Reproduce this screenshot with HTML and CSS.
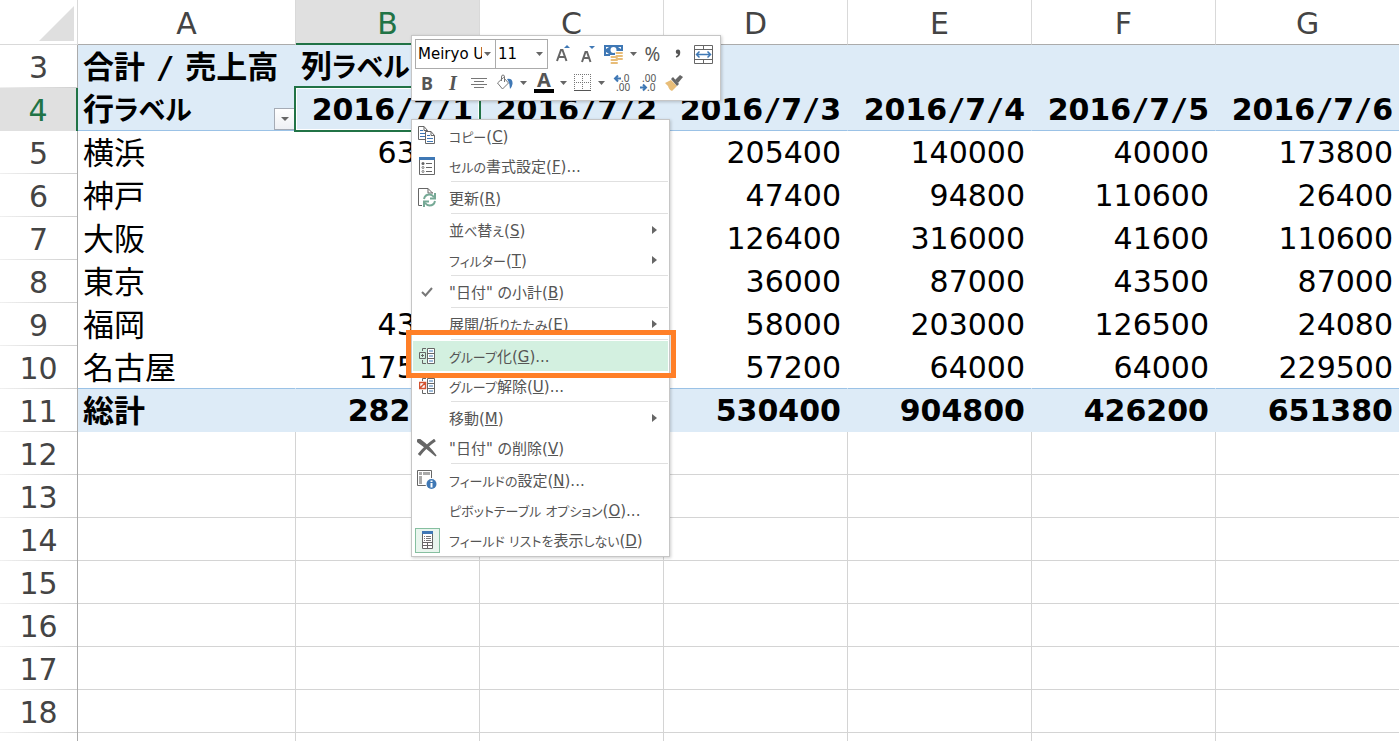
FILE: index.html
```html
<!DOCTYPE html>
<html lang="ja">
<head>
<meta charset="utf-8">
<title>合計 / 売上高</title>
<link rel="stylesheet" href="styles.css">
</head>
<body>
<main class="sheet">
<table class="grid">
<colgroup><col class="col-num"><col class="col-a"><col class="col-day"><col class="col-day"><col class="col-day"><col class="col-day"><col class="col-day"><col></colgroup>
<thead>
<tr><th class="corner"><svg width="35" height="35" viewBox="0 0 35 35" aria-hidden="true"><path d="M35 0V35H0Z" fill="#dfdfdf"/></svg></th><th>A</th><th class="current">B</th><th>C</th><th>D</th><th>E</th><th>F</th><th>G</th></tr>
</thead>
<tbody>
<tr class="label-row"><th>3</th><td class="name">合計 <span class="slash">/</span> 売上高</td><td class="name">列<span class="kana">ラベル</span></td><td></td><td></td><td></td><td></td><td></td></tr>
<tr class="label-row ruled"><th class="current">4</th><td class="name has-filter">行<span class="kana">ラベル</span><button class="filter" aria-label="フィルター"><svg width="8" height="4" viewBox="0 0 8 4"><path d="M0 0H8L4 4Z" fill="#666"/></svg></button></td><td class="active">2016<span class="slash">/</span>7<span class="slash">/</span>1</td><td>2016<span class="slash">/</span>7<span class="slash">/</span>2</td><td>2016<span class="slash">/</span>7<span class="slash">/</span>3</td><td>2016<span class="slash">/</span>7<span class="slash">/</span>4</td><td>2016<span class="slash">/</span>7<span class="slash">/</span>5</td><td>2016<span class="slash">/</span>7<span class="slash">/</span>6</td></tr>
<tr class="data"><th>5</th><td class="name">横浜</td><td>63000</td><td></td><td>205400</td><td>140000</td><td>40000</td><td>173800</td></tr>
<tr class="data"><th>6</th><td class="name">神戸</td><td></td><td></td><td>47400</td><td>94800</td><td>110600</td><td>26400</td></tr>
<tr class="data"><th>7</th><td class="name">大阪</td><td></td><td></td><td>126400</td><td>316000</td><td>41600</td><td>110600</td></tr>
<tr class="data"><th>8</th><td class="name">東京</td><td></td><td></td><td>36000</td><td>87000</td><td>43500</td><td>87000</td></tr>
<tr class="data"><th>9</th><td class="name">福岡</td><td>43000</td><td></td><td>58000</td><td>203000</td><td>126500</td><td>24080</td></tr>
<tr class="data ruled"><th>10</th><td class="name">名古屋</td><td>175000</td><td></td><td>57200</td><td>64000</td><td>64000</td><td>229500</td></tr>
<tr class="label-row"><th>11</th><td class="name">総計</td><td>282000</td><td></td><td>530400</td><td>904800</td><td>426200</td><td>651380</td></tr>
<tr><th>12</th><td></td><td></td><td></td><td></td><td></td><td></td><td></td></tr>
<tr><th>13</th><td></td><td></td><td></td><td></td><td></td><td></td><td></td></tr>
<tr><th>14</th><td></td><td></td><td></td><td></td><td></td><td></td><td></td></tr>
<tr><th>15</th><td></td><td></td><td></td><td></td><td></td><td></td><td></td></tr>
<tr><th>16</th><td></td><td></td><td></td><td></td><td></td><td></td><td></td></tr>
<tr><th>17</th><td></td><td></td><td></td><td></td><td></td><td></td><td></td></tr>
<tr><th>18</th><td></td><td></td><td></td><td></td><td></td><td></td><td></td></tr>
<tr><th></th><td></td><td></td><td></td><td></td><td></td><td></td><td></td></tr>
</tbody>
</table>

<div class="toolbar" role="toolbar" aria-label="書式">
<div class="tools tools-top">
<span class="combo combo-font"><select aria-label="フォント"><option>Meiryo UI</option></select><svg class="caret" width="7" height="4" viewBox="0 0 7 4"><path d="M0 0H7L3.500 4Z"/></svg></span>
<span class="combo combo-size"><select aria-label="フォント サイズ"><option>11</option></select><svg class="caret" width="7" height="4" viewBox="0 0 7 4"><path d="M0 0H7L3.500 4Z"/></svg></span>
<button class="tool first" aria-label="拡大"><svg width="18" height="20" viewBox="0 0 18 20"><path d="M3 17L7 6H8.500L12.500 17M4.500 13H11" fill="none" stroke="#666" stroke-width="2"/><path d="M10 4L13 1L16 4Z" fill="#3f78b5"/></svg></button>
<button class="tool" aria-label="縮小"><svg width="18" height="20" viewBox="0 0 18 20"><path d="M3 18L6.500 8H8L11.500 18M4.500 14H10" fill="none" stroke="#666" stroke-width="2"/><path d="M10 2H16L13 5Z" fill="#3f78b5"/></svg></button>
<button class="tool wide" aria-label="通貨"><svg width="20" height="20" viewBox="0 0 20 20"><path d="M0 1H19V12H0Z" fill="#3f78b5"/><path d="M2 3H5L2 5ZM17 3H14L17 5ZM2 10H5L2 8Z" fill="#fff"/><circle cx="9.500" cy="6" r="3" fill="#fff"/><path d="M11 7H20V18H15V20H6V11H11Z" fill="#fff"/><path d="M12.500 9H18M12.500 12H18M12.500 15H18M7.500 13H13M7.500 16H13M7.500 19H13" stroke="#e8bd78" stroke-width="2" stroke-linecap="round"/></svg><svg class="caret" width="7" height="4" viewBox="0 0 7 4"><path d="M0 0H7L3.500 4Z"/></svg></button>
<button class="tool percent">%</button>
<button class="tool" aria-label="桁区切り"><svg width="6" height="10" viewBox="0 0 8 12"><path d="M1 3Q1 0 4 0Q7 0 7 4Q7 9 2 11L1 9Q4 8 4 6Q1 6 1 3Z" fill="#555"/></svg></button>
<button class="tool" aria-label="セルを結合"><svg width="20" height="20" viewBox="0 0 20 20"><path d="M1.500 1.500H19.500V19.500H1.500ZM1.500 5.500H19.500M1.500 15.500H19.500M10.500 1.500V5.500M10.500 15.500V19.500" fill="none" stroke="#666"/><path d="M4 10.500H17M6.500 7.500L3.500 10.500L6.500 13.500M14.500 7.500L17.500 10.500L14.500 13.500" fill="none" stroke="#3f78b5" stroke-width="1.500"/></svg></button>
</div>
<div class="tools tools-bottom">
<button class="tool bold">B</button>
<button class="tool italic">I</button>
<button class="tool" aria-label="中央揃え"><svg width="16" height="13" viewBox="0 0 16 13"><path d="M0 1.500H16M3 4.500H13M0 7.500H16M3 10.500H13" stroke="#777"/></svg></button>
<button class="tool wide" aria-label="塗りつぶしの色"><svg width="18" height="18" viewBox="0 0 18 18"><path d="M1.500 9L7.500 3.500L12.500 9L6.500 15Z" fill="#fff" stroke="#777"/><path d="M5.500 7V3Q5.500 1 7 1Q8.500 1 8.500 3V8" fill="none" stroke="#777"/><path d="M11 5Q17 4 16.500 10Q16 13 14 15Q14 9 11 5Z" fill="#3f78b5"/></svg><svg class="caret" width="7" height="4" viewBox="0 0 7 4"><path d="M0 0H7L3.500 4Z"/></svg></button>
<button class="tool wide" aria-label="フォントの色"><span class="ink">A</span><svg class="caret" width="7" height="4" viewBox="0 0 7 4"><path d="M0 0H7L3.500 4Z"/></svg></button>
<button class="tool wide" aria-label="罫線"><svg width="18" height="18" viewBox="0 0 18 18" shape-rendering="crispEdges"><path d="M0 .5H17M.5 0V16M16.500 0V16M8.500 0V16M0 8.500H17" fill="none" stroke="#777" stroke-dasharray="1 1"/><path d="M0 16.500H17" stroke="#555"/></svg><svg class="caret" width="7" height="4" viewBox="0 0 7 4"><path d="M0 0H7L3.500 4Z"/></svg></button>
<button class="tool" aria-label="小数点以下の表示桁数を増やす"><svg class="digits" width="22" height="26" viewBox="0 0 22 26"><path d="M4 8.500H10M7 5.500L4 8.500L7 11.500" fill="none" stroke="#3f78b5" stroke-width="2"/><text x="10" y="12">.0</text><text x="5" y="21">.00</text></svg></button>
<button class="tool" aria-label="小数点以下の表示桁数を減らす"><svg class="digits" width="22" height="26" viewBox="0 0 22 26"><text x="5" y="12">.00</text><path d="M3 17.500H9M6 14.500L9 17.500L6 20.500" fill="none" stroke="#3f78b5" stroke-width="2"/><text x="10" y="21">.0</text></svg></button>
<button class="tool" aria-label="書式のコピー"><svg width="18" height="18" viewBox="0 0 18 18"><path d="M0 9L6 6L12 12L7 17Q4 16 3 12Z" fill="#e8bd78"/><path d="M6 5L8 3L14 10L12 12Z" fill="#666"/><path d="M10 6L15 1L18 3L13 9Z" fill="#666"/></svg></button>
</div>
</div>

<div class="menu" role="menu">
<button class="item" role="menuitem"><span class="icon"><svg width="18" height="20" viewBox="0 0 18 20"><path d="M.5 .5H6L9.500 4.500V13.500H.5ZM6 .5V4.500H9.500" fill="#fff" stroke="#666"/><path d="M2 4.500H5M2 7.500H7M2 10.500H7" stroke="#3f78b5"/><path d="M7.500 5.500H13L16.500 9.500V17.500H7.500ZM13 5.500V9.500H16.500" fill="#fff" stroke="#666"/><path d="M9 9.500H12M9 12.500H15M9 15.500H15" stroke="#3f78b5"/></svg></span><span class="text"><span class="kana">コピー</span>(<u>C</u>)</span></button>
<button class="item" role="menuitem"><span class="icon"><svg width="16" height="18" viewBox="0 0 16 18"><path d="M.5 .5H15.500V17.500H.5Z" fill="#fff" stroke="#666"/><path d="M0 0H16V3H0Z" fill="#3f78b5"/><path d="M7 6.500H13M7 10.500H13M7 14.500H13" stroke="#666"/><circle cx="4" cy="6.500" r="1.500" fill="#666"/><g fill="none" stroke="#777"><circle cx="4" cy="10.500" r="1"/><circle cx="4" cy="14.500" r="1"/></g></svg></span><span class="text"><span class="kana">セルの</span>書式設定(<u>F</u>)...</span></button>
<hr>
<button class="item" role="menuitem"><span class="icon"><svg width="18" height="20" viewBox="0 0 18 20"><path d="M4 17.500H.5V.5H10L14.500 5M10 .5V5H15" fill="none" stroke="#666"/><path d="M6 11Q7 6.500 11.500 6.500Q14 6.500 16 9M17 5V10.500H12M17 13Q16 17.500 11.500 17.500Q9 17.500 7 15M6 19V13.500H11" fill="none" stroke="#76a996" stroke-width="2"/></svg></span><span class="text">更新(<u>R</u>)</span></button>
<hr>
<button class="item" role="menuitem"><span class="icon"></span><span class="text">並<span class="kana">べ</span>替<span class="kana">え</span>(<u>S</u>)</span><svg class="more" width="5" height="8" viewBox="0 0 5 8"><path d="M0 0L5 4L0 8Z"/></svg></button>
<button class="item" role="menuitem"><span class="icon"></span><span class="text"><span class="kana">フィルター</span>(<u>T</u>)</span><svg class="more" width="5" height="8" viewBox="0 0 5 8"><path d="M0 0L5 4L0 8Z"/></svg></button>
<hr>
<button class="item" role="menuitemcheckbox" aria-checked="true"><span class="icon"><svg width="12" height="12" viewBox="0 0 12 12"><path d="M1 6L4.500 9.500L11 2" fill="none" stroke="#777" stroke-width="2"/></svg></span><span class="text">"日付" の小計(<u>B</u>)</span></button>
<hr>
<button class="item" role="menuitem"><span class="icon"></span><span class="text">展開/折<span class="kana">りたたみ</span>(<u>E</u>)</span><svg class="more" width="5" height="8" viewBox="0 0 5 8"><path d="M0 0L5 4L0 8Z"/></svg></button>
<hr>
<button class="item hover" role="menuitem"><span class="icon"><svg width="16" height="18" viewBox="0 0 16 18"><path d="M8.500 1.500H15.500V16.500H8.500ZM8.500 6.500H15.500M8.500 11.500H15.500" fill="#fff" stroke="#666"/><path d="M10 4H14M10 9H14M10 14H14" stroke="#3f78b5"/><path d="M7 1.500H3.500V4M7 16.500H3.500V13M.5 5.500H6.500V11.500H.5ZM2 8.500H5M3.500 7V10" fill="none" stroke="#666"/></svg></span><span class="text"><span class="kana">グループ</span>化(<u>G</u>)...</span></button>
<button class="item" role="menuitem"><span class="icon"><svg width="16" height="18" viewBox="0 0 16 18"><path d="M8.500 1.500H15.500V16.500H8.500ZM8.500 6.500H15.500M8.500 11.500H15.500" fill="#fff" stroke="#666"/><path d="M10 4H14M10 9H14M10 14H14" stroke="#3f78b5"/><path d="M7 1.500H3.500V4M7 16.500H3.500V13" fill="none" stroke="#666"/><path d="M.5 5.500H6.500V11.500H.5ZM.5 11.500L6.500 5.500" fill="#fff" stroke="#d35230" stroke-width="1.500"/></svg></span><span class="text"><span class="kana">グループ</span>解除(<u>U</u>)...</span></button>
<hr>
<button class="item" role="menuitem"><span class="icon"></span><span class="text">移動(<u>M</u>)</span><svg class="more" width="5" height="8" viewBox="0 0 5 8"><path d="M0 0L5 4L0 8Z"/></svg></button>
<button class="item" role="menuitem"><span class="icon"><svg width="20" height="18" viewBox="0 0 20 18"><path d="M2 0Q0 1 1 3Q11 10 19 17Q12 7 2 0Z" fill="#666" stroke="#666" stroke-width="1.500"/><path d="M18 1Q9 7 2 16" fill="none" stroke="#666" stroke-width="3"/></svg></span><span class="text">"日付" の削除(<u>V</u>)</span></button>
<hr>
<button class="item" role="menuitem"><span class="icon"><svg width="20" height="20" viewBox="0 0 20 20"><path d="M.5 .5H14.500V15.500H.5Z" fill="#fff" stroke="#666"/><path d="M2 2H5V5H2ZM6 2H13V5H6ZM2 6H5V14H2Z" fill="#aaa"/><circle cx="14.500" cy="14" r="6" fill="#fff"/><circle cx="14.500" cy="14" r="5" fill="#3f78b5"/><path d="M14.500 10.500V12M14.500 13V17.500" stroke="#fff" stroke-width="2"/></svg></span><span class="text"><span class="kana">フィールドの</span>設定(<u>N</u>)...</span></button>
<button class="item" role="menuitem"><span class="icon"></span><span class="text"><span class="kana">ピボットテーブル オプション</span>(<u>O</u>)...</span></button>
<button class="item" role="menuitem"><span class="icon"><span class="pressed"><svg width="11" height="18" viewBox="0 0 11 18"><path d="M.5 .5H10.500V17.500H.5Z" fill="#fff" stroke="#666"/><path d="M0 0H11V3H0Z" fill="#3f78b5"/><path d="M2 5.500H3M4 5.500H9M2 7.500H3M4 7.500H9M2 9.500H3M4 9.500H9" stroke="#777"/><path d="M0 11.500H11M0 14.500H11M5.500 11.500V17.500" stroke="#666"/></svg></span></span><span class="text"><span class="kana">フィールド リストを</span>表示<span class="kana">しない</span>(<u>D</u>)</span></button>
</div>
<div class="callout"></div>
</main>
</body>
</html>
```
FILE: styles.css
```css
* { box-sizing: border-box; }
body {
  margin: 0;
  background: #fff;
  font-family: "DejaVu Sans", "Noto Sans CJK JP", sans-serif;
  font-feature-settings: "palt";
}
button, select { font: inherit; color: inherit; padding: 0; border: 0; background: none; }
svg { display: block; flex: none; }

.sheet { position: relative; height: 100vh; overflow: hidden; }

.grid {
  width: 100%;
  table-layout: fixed;
  border-collapse: separate;
  border-spacing: 0;
  font-size: 30px;
  line-height: 36px;
}
.col-num { width: 78px; }
.col-a { width: 218px; }
.col-day { width: 184px; }
.grid th { padding: 2px 0 0; color: #444; font-weight: 400; text-align: center; white-space: nowrap; }
.grid thead th {
  height: 45px;
  padding-top: 4px;
  border-right: 1px solid #d9d9d9;
  border-bottom: 1px solid #ababab;
}
.grid thead .corner { padding: 0 3px 3px; border-bottom-color: #d9d9d9; vertical-align: bottom; }
.corner svg { margin-left: auto; }
.grid thead .current {
  padding-top: 5px;
  background: #e0e0e0;
  color: #217346;
  border-bottom: 2px solid #217346;
}
.grid tbody th {
  height: 43px;
  border-right: 1px solid #ababab;
  background: linear-gradient(90deg, #f0f0f0, #cfcfcf) bottom / 100% 1px no-repeat;
}
.grid tbody .current { background: #e0e0e0; color: #217346; border-right: 2px solid #217346; }
.grid td {
  height: 43px;
  padding: 2px 6px 0 5px;
  border-right: 1px solid #d4d4d4;
  border-bottom: 1px solid #d4d4d4;
  text-align: right;
  white-space: nowrap;
}
.grid .name { font-size: 31px; text-align: left; }
.grid .name .kana { font-size: 27px; }
.grid .data td { border-color: #fff; }
.grid .label-row td { background: #ddebf7; border-color: #ddebf7; font-weight: 700; }
.grid .ruled td { border-bottom-color: #9bc2e6; }
.grid tr > :last-child { border-right: 0; }
.slash { font-family: "DejaVu Sans Mono", monospace; }
.has-filter, .active { position: relative; }
.filter {
  position: absolute;
  right: 0;
  bottom: 0;
  width: 21px;
  height: 22px;
  display: flex;
  align-items: center;
  justify-content: center;
  border: 1px solid #a5abb5;
  background: linear-gradient(#fff, #eef0f4);
}
.active::after {
  content: "";
  position: absolute;
  inset: -2px;
  border: 2px solid #217346;
  box-shadow: inset 0 0 0 1px #fff;
}

.toolbar, .menu {
  position: absolute;
  left: 411px;
  border: 1px solid #c6c6c6;
  background: #fff;
  box-shadow: 1px 1px 3px rgba(0, 0, 0, .2);
}
.toolbar { top: 35px; width: 310px; padding: 3px 2px; color: #555; font-size: 15px; }
.tools { display: flex; align-items: center; }
.tools-top { height: 30px; padding-left: 1px; }
.tools-bottom { height: 28px; }
.combo { position: relative; height: 30px; border: 1px solid #ababab; color: #000; }
.combo-font { width: 81px; }
.combo-size { width: 53px; margin-left: -1px; }
.combo select { appearance: none; width: 100%; height: 28px; padding: 0 13px 0 2px; outline: 0; }
.combo .caret { position: absolute; right: 4px; top: 12px; }
.caret, .more { fill: #666; }
.tool { display: flex; align-items: center; justify-content: center; width: 26px; height: 28px; }
.tools-top .tool { width: 25px; }
.tools-top .first { margin-left: 2px; }
.tools .wide { width: 39px; gap: 6px; }
.tools-top .wide { width: 40px; }
.percent { font-family: "Noto Sans", sans-serif; font-size: 19px; }
.bold { font-family: "Noto Sans", sans-serif; font-size: 18px; font-weight: 700; }
.italic { font-family: "Liberation Serif", serif; font-size: 20px; font-weight: 700; font-style: italic; }
.ink {
  width: 20px;
  height: 20px;
  border-bottom: 4px solid #000;
  font-family: "Noto Sans", sans-serif;
  font-size: 20px;
  font-weight: 700;
  line-height: 14px;
}
.digits { font-family: "Noto Sans", sans-serif; font-size: 10px; fill: #555; }

.menu { top: 119px; width: 259px; padding: 1px; color: #555; font-size: 15px; }
.item {
  display: flex;
  align-items: center;
  width: 100%;
  height: 30px;
  white-space: pre;
  text-align: left;
}
.text { padding-top: 2px; line-height: 20px; }
.text .kana { font-size: 13px; }
.icon { display: flex; align-items: center; justify-content: center; width: 28px; height: 30px; margin-right: 8px; flex: none; }
.more { margin-left: auto; margin-right: 11px; }
.hover { background: #d3f0e0; }
.menu hr { height: 1px; margin: 0 0 1px 38px; border: 0; background: #e0e0e0; }
.pressed {
  display: flex;
  align-items: center;
  justify-content: center;
  width: 25px;
  height: 25px;
  border: 1px solid #86bfa0;
  background: #e9f5ee;
}
.callout {
  position: absolute;
  left: 406px;
  top: 330px;
  width: 270px;
  height: 48px;
  border: 5px solid #ff7f27;
}
```
